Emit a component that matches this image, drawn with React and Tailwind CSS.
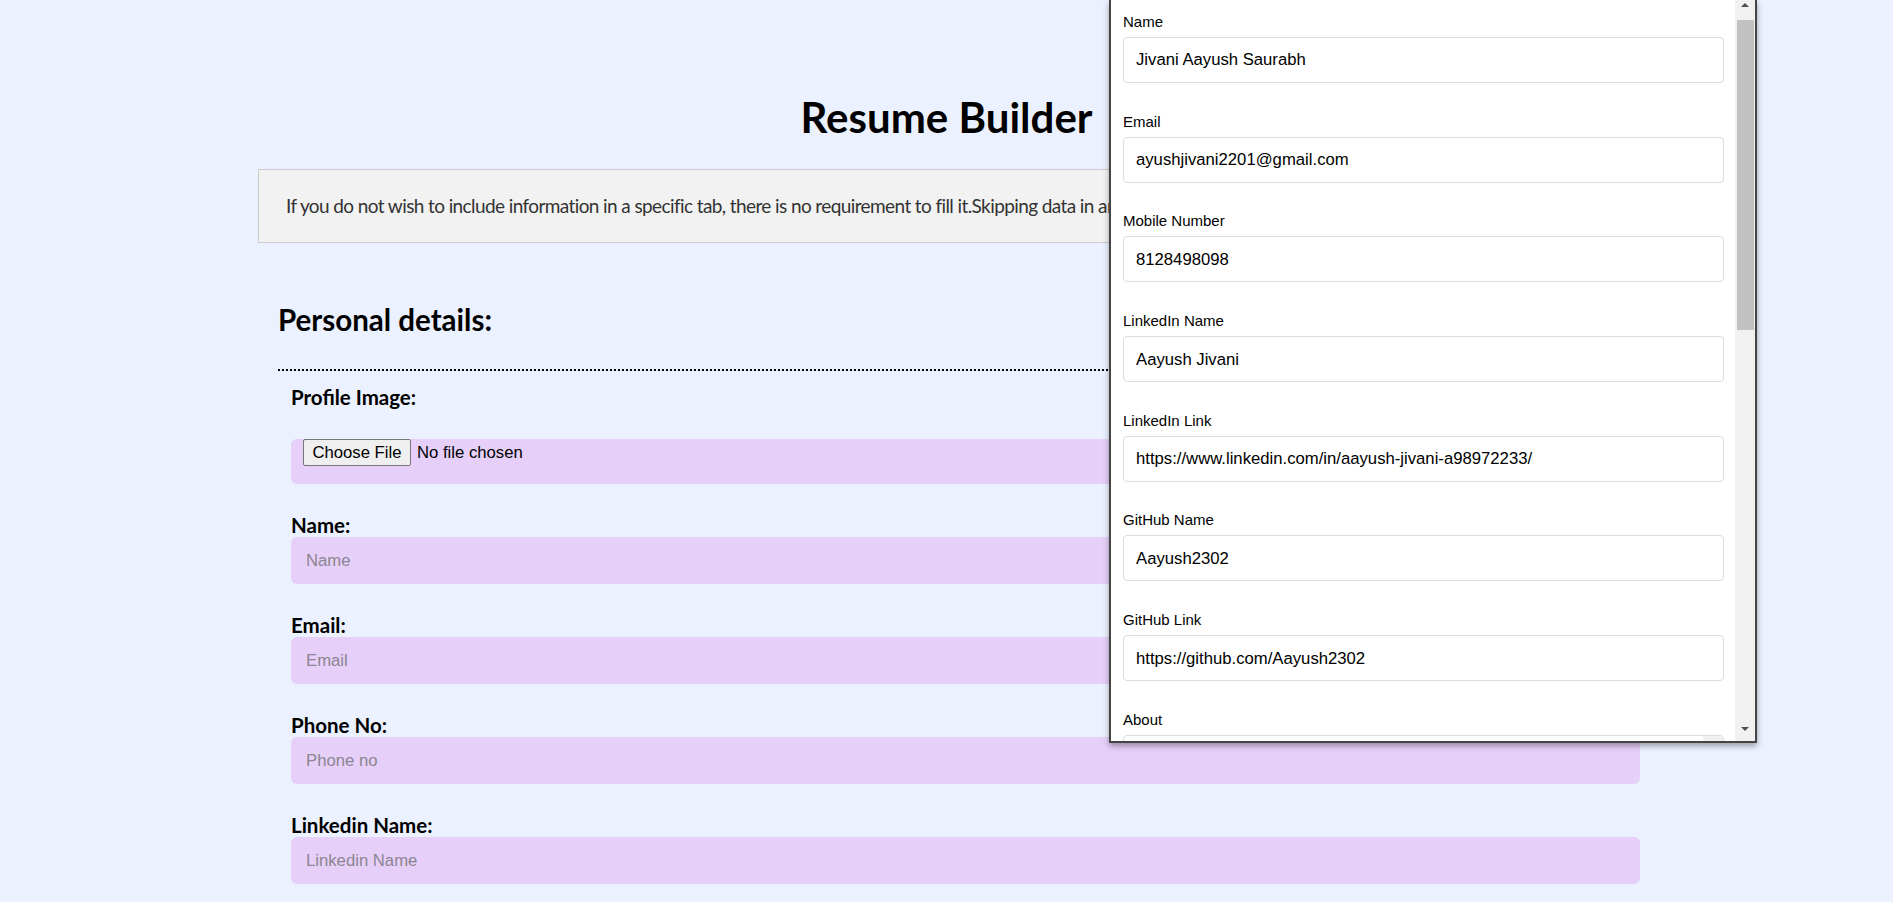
const PAGE_FIELDS = [
  { label: 'Name:', placeholder: 'Name' },
  { label: 'Email:', placeholder: 'Email' },
  { label: 'Phone No:', placeholder: 'Phone no' },
  { label: 'Linkedin Name:', placeholder: 'Linkedin Name' },
  { label: 'Linkedin Link:', placeholder: 'Linkedin Link' },
  { label: 'Github Name:', placeholder: 'Github Name' },
];

const POPUP_FIELDS = [
  { label: 'Name', value: 'Jivani Aayush Saurabh' },
  { label: 'Email', value: 'ayushjivani2201@gmail.com' },
  { label: 'Mobile Number', value: '8128498098' },
  { label: 'LinkedIn Name', value: 'Aayush Jivani' },
  { label: 'LinkedIn Link', value: 'https://www.linkedin.com/in/aayush-jivani-a98972233/' },
  { label: 'GitHub Name', value: 'Aayush2302' },
  { label: 'GitHub Link', value: 'https://github.com/Aayush2302' },
];

function PageField({ label, placeholder }) {
  return (
    <div className="mb-[29px]">
      <div className="text-[20.5px] leading-[24px] font-bold text-black">{label}</div>
      <div className="h-[47px] w-[1349px] rounded-[6px] bg-[#e6d0fa] pl-[15px] flex items-center font-['Liberation_Sans',Arial,sans-serif] text-[16.7px] leading-[20px] text-[#8a8590]">
        {placeholder}
      </div>
    </div>
  );
}

function PopupField({ label, value }) {
  return (
    <div className="mb-[29.7px]">
      <div className="text-[15px] leading-[17px] text-black">{label}</div>
      <div className="mt-[7px] h-[46px] rounded-[4px] border border-[#dcdcdc] pl-[12px] flex items-center text-[16.7px] text-black whitespace-nowrap overflow-hidden">
        {value}
      </div>
    </div>
  );
}

function Scrollbar() {
  return (
    <div className="w-[20px] shrink-0 bg-[#f1f1f1] flex flex-col items-center">
      <div className="h-[20px] flex items-start pt-[3px]">
        <div className="w-0 h-0 border-l-[4px] border-r-[4px] border-b-[4px] border-l-transparent border-r-transparent border-b-[#505050]" />
      </div>
      <div className="w-[17px] h-[310px] bg-[#c1c1c1]" />
      <div className="flex-1" />
      <div className="h-[14px] flex items-start">
        <div className="w-0 h-0 border-l-[4px] border-r-[4px] border-t-[4px] border-l-transparent border-r-transparent border-t-[#505050]" />
      </div>
    </div>
  );
}

function AutofillPopup() {
  return (
    <div className="absolute top-0 left-[1109px] w-[648px] h-[743px] bg-white border-l-2 border-r-2 border-b-2 border-[#444] shadow-[0_3px_6px_rgba(0,0,0,0.35)] flex font-['Liberation_Sans',Arial,sans-serif]">
      <div className="flex-1 overflow-hidden pl-[12px] pr-[11px] pt-[13px]">
        {POPUP_FIELDS.map(f => <PopupField key={f.label} {...f} />)}
        <div>
          <div className="text-[15px] leading-[17px] text-black">About</div>
          <div className="mt-[7px] h-[80px] rounded-[4px] border border-[#dcdcdc] flex justify-end">
            <div className="w-[20px] bg-[#f0f0f0]" />
          </div>
        </div>
      </div>
      <Scrollbar />
    </div>
  );
}

export default function App() {
  return (
    <div className="relative h-[902px] overflow-hidden bg-[#ebf1fe] font-['Lato',sans-serif]">
      <h1 className="pt-[90px] text-center text-[42px] leading-[54px] font-bold text-black">Resume Builder</h1>

      <div className="mt-[25px] ml-[258px] w-[1377px] h-[74px] border border-[#cccccc] bg-[#f2f2f2] pl-[27px] flex items-center overflow-hidden">
        <p className="text-[19px] leading-[24px] tracking-[-0.6px] text-[#333] whitespace-nowrap">
          If you do not wish to include information in a specific tab, there is no requirement to fill it.Skipping data in any tab will not affect your resume.
        </p>
      </div>

      <div className="ml-[278px] w-[1362px]">
        <h2 className="mt-[59px] pb-[31px] text-[29.5px] leading-[36px] font-bold text-black border-b-2 border-dotted border-black">
          Personal details:
        </h2>
        <div className="pl-[13px]">
          <div className="mt-[14px] text-[20.5px] leading-[24px] font-bold text-black">Profile Image:</div>
          <div className="mt-[30px] mb-[29px] h-[45px] w-[1349px] rounded-[6px] bg-[#e6d0fa] pl-[12px] flex items-start gap-[6px] font-['Liberation_Sans',Arial,sans-serif] text-[16.7px] text-black">
            <div className="h-[27px] w-[108px] rounded-[2px] border border-[#767676] bg-[#efefef] flex items-center justify-center">Choose File</div>
            <div className="h-[27px] flex items-center">No file chosen</div>
          </div>
          {PAGE_FIELDS.map(f => <PageField key={f.label} {...f} />)}
        </div>
      </div>

      <AutofillPopup />
    </div>
  );
}
